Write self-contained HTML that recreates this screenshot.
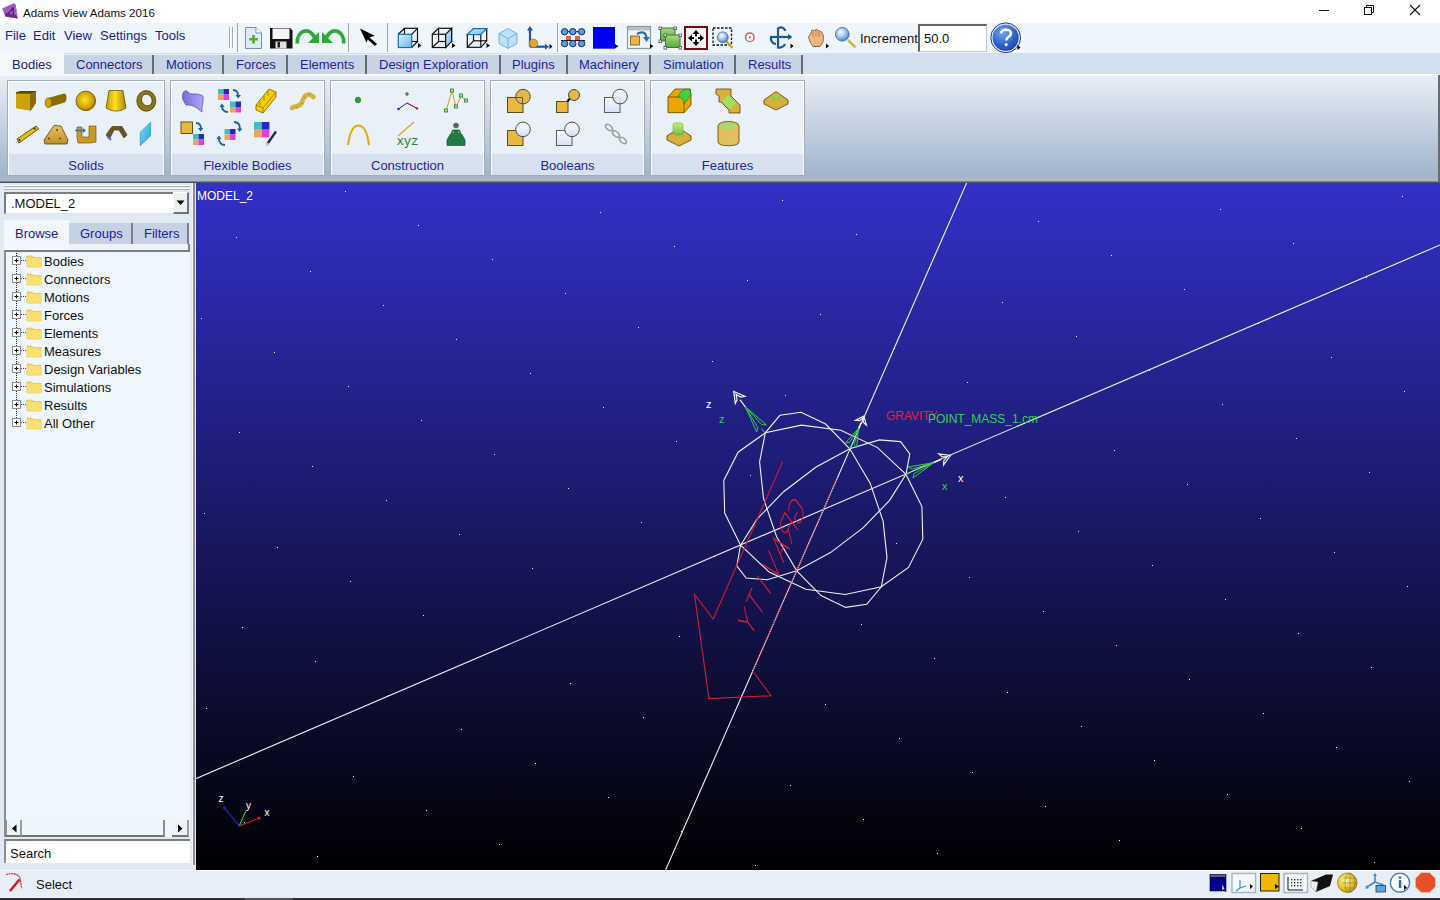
<!DOCTYPE html>
<html><head><meta charset="utf-8">
<style>
*{margin:0;padding:0;box-sizing:border-box}
html,body{width:1440px;height:900px;overflow:hidden;background:#fff;font-family:"Liberation Sans",sans-serif}
.a{position:absolute}
#title{left:0;top:0;width:1440px;height:22px;background:#fff}
#menu{left:0;top:23px;width:1440px;height:30px;background:#EEF5FC}
#tabs{left:0;top:53px;width:1440px;height:21px;background:#D3DEEF}
#ribbon{left:0;top:74px;width:1440px;height:109px;background:linear-gradient(#FAFCFE 0px,#FAFCFE 1px,#E8EEF6 2px,#A0B4CC 103px,#AEB8C4 104px,#AEB8C4 107px,#4A5068 108px)}
#left{left:0;top:183px;width:196px;height:687px;background:#E1E9F3}
#vp{left:196px;top:183px;width:1244px;height:687px;background:linear-gradient(#3230C8,#000)}
#status{left:0;top:870px;width:1440px;height:28px;background:#E7EEF7}
#bottom{left:0;top:898px;width:1440px;height:2px;background:#2E3236}
.t{position:absolute;white-space:nowrap;font-size:13px;line-height:14px}
.mn{color:#1E1E8C}
.tab{position:absolute;top:55px;height:19px;background:#C8D3E3;border-right:2px solid #646A72}
.tabt{position:absolute;top:58px;font-size:13px;line-height:14px;color:#1E1E9C;white-space:nowrap}
.panel{position:absolute;top:80px;height:96px;border:1px solid #A3ABB5;background:#E9F0F8;box-shadow:inset 0 0 0 1px #fff}
.plabel{position:absolute;left:1px;right:1px;bottom:0px;height:21px;background:#D6E0EE;color:#24249E;font-size:13px;line-height:23px;text-align:center}
svg{position:absolute;left:0;top:0}
</style></head>
<body>
<div id="title" class="a"></div>
<div id="menu" class="a"></div>
<div id="tabs" class="a"></div>
<div id="ribbon" class="a"></div>
<div id="left" class="a"></div>
<div id="vp" class="a"></div>
<div id="status" class="a"></div>
<div id="bottom" class="a"></div>
<!-- title -->
<div class="t" style="left:23px;top:6px;font-size:11.6px;color:#111">Adams View Adams 2016</div>
<!-- menu -->
<div class="t mn" style="left:5px;top:29px">File</div>
<div class="t mn" style="left:33px;top:29px">Edit</div>
<div class="t mn" style="left:64px;top:29px">View</div>
<div class="t mn" style="left:100px;top:29px">Settings</div>
<div class="t mn" style="left:155px;top:29px">Tools</div>
<!-- tabs -->
<div class="a" style="left:0;top:52px;width:64px;height:23px;background:#F4F8FD"></div>
<div class="a" style="left:64px;top:53.5px;width:739px;height:1.5px;background:#EAF0F8"></div>
<div class="tabt" style="left:12px;color:#20207A">Bodies</div>
<div class="tab" style="left:64px;width:90px"></div><div class="tabt" style="left:76px">Connectors</div>
<div class="tab" style="left:154px;width:70px"></div><div class="tabt" style="left:166px">Motions</div>
<div class="tab" style="left:224px;width:64px"></div><div class="tabt" style="left:236px">Forces</div>
<div class="tab" style="left:288px;width:79px"></div><div class="tabt" style="left:300px">Elements</div>
<div class="tab" style="left:367px;width:134px"></div><div class="tabt" style="left:379px">Design Exploration</div>
<div class="tab" style="left:501px;width:67px"></div><div class="tabt" style="left:512px">Plugins</div>
<div class="tab" style="left:568px;width:83px"></div><div class="tabt" style="left:579px">Machinery</div>
<div class="tab" style="left:651px;width:85px"></div><div class="tabt" style="left:663px">Simulation</div>
<div class="tab" style="left:736px;width:67px"></div><div class="tabt" style="left:748px">Results</div>
<!-- ribbon panels -->
<div class="panel" style="left:7px;width:158px"><div class="plabel">Solids</div></div>
<div class="panel" style="left:170px;width:155px"><div class="plabel">Flexible Bodies</div></div>
<div class="panel" style="left:330px;width:155px"><div class="plabel">Construction</div></div>
<div class="panel" style="left:490px;width:155px"><div class="plabel">Booleans</div></div>
<div class="panel" style="left:650px;width:155px"><div class="plabel">Features</div></div>
<!-- toolbar extra -->
<div class="t" style="left:860px;top:32px;color:#111">Increment</div>
<div class="a" style="left:918px;top:24px;width:69px;height:28px;background:#fff;border:1px solid #C4C8CC;border-top:2px solid #646464;border-left:2px solid #646464"></div>
<div class="t" style="left:924px;top:32px;color:#111">50.0</div>
<div class="a" style="left:1438px;top:75px;width:2px;height:107px;background:#686C72"></div>
<svg width="1440" height="80" viewBox="0 0 1440 80">
<defs>
<linearGradient id="gBlue" x1="0" y1="0" x2="1" y2="1"><stop offset="0" stop-color="#D8F0FF"/><stop offset="1" stop-color="#6FB8E8"/></linearGradient>
<radialGradient id="gHelp" cx="0.4" cy="0.3" r="0.8"><stop offset="0" stop-color="#6FA8F0"/><stop offset="0.6" stop-color="#2B5FC8"/><stop offset="1" stop-color="#1A3C98"/></radialGradient>
<radialGradient id="gGlass" cx="0.4" cy="0.35" r="0.7"><stop offset="0" stop-color="#FFFFFF"/><stop offset="0.5" stop-color="#9CC8F0"/><stop offset="1" stop-color="#3A78C8"/></radialGradient>
<linearGradient id="gGreen" x1="0" y1="0" x2="0" y2="1"><stop offset="0" stop-color="#A8D880"/><stop offset="1" stop-color="#5CA838"/></linearGradient>
</defs>
<!-- title icon -->
<path d="M2 8.5 L14.5 3 L17.8 18.5 L5.5 16.5 Z" fill="#A658C8"/>
<path d="M14.5 3 L17.8 18.5 L15.8 5.5Z" fill="#7A3098"/><path d="M5.5 16.5 L17.8 18.5 L16 15 L5 13Z" fill="#6A2A88"/>
<path d="M7.5 14.5 L13 8 L13.5 14.5" fill="none" stroke="#3A0F50" stroke-width="1.1"/>
<!-- window controls -->
<rect x="1319" y="10" width="10" height="1" fill="#111"/>
<rect x="1364.5" y="7.5" width="7" height="7" fill="none" stroke="#111" stroke-width="1"/>
<path d="M1366.5 7.5 V5.5 H1373.5 V12.5 H1371.5" fill="none" stroke="#111" stroke-width="1"/>
<path d="M1410 5 L1420 15 M1420 5 L1410 15" stroke="#111" stroke-width="1.1"/>
<!-- grip -->
<path d="M229.5 27 V48 M232.5 27 V48" stroke="#A8ACB2" stroke-width="1"/>
<path d="M230.5 27 V48 M233.5 27 V48" stroke="#FFFFFF" stroke-width="1"/>
<rect x="237" y="23" width="1" height="29" fill="#A0A4AA"/>
<rect x="348" y="23" width="1" height="29" fill="#A0A4AA"/>
<rect x="387" y="23" width="1" height="29" fill="#A0A4AA"/>
<rect x="557" y="23" width="1" height="29" fill="#A0A4AA"/>
<!-- new doc -->
<path d="M245.5 27.5 H256 L261.5 33 V48.5 H245.5 Z" fill="#DDEBFA" stroke="#8088B8" stroke-width="1"/>
<path d="M256 27.5 V33 H261.5" fill="#fff" stroke="#8088B8" stroke-width="1"/>
<path d="M253.5 35 V43.5 M249.2 39.2 H257.8" stroke="#4CB028" stroke-width="2.6"/>
<!-- save -->
<path d="M270 28 H290 L292.5 30.5 V48.5 H270 Z" fill="#111"/>
<rect x="272.5" y="28.5" width="17" height="10.5" fill="#F4F4F4"/>
<rect x="275.5" y="41.5" width="11" height="7" fill="#E0E0E0"/>
<rect x="277.5" y="42" width="2.5" height="5.5" fill="#222"/>
<!-- redo / undo -->
<path d="M297.3 43.5 C296.5 31 309 25.5 314.5 37.5" fill="none" stroke="#2FA83A" stroke-width="3.8"/>
<path d="M319 32 V43 H308 Z" fill="#2FA83A"/>
<path d="M343.7 43.5 C344.5 31 332 25.5 326.5 37.5" fill="none" stroke="#2FA83A" stroke-width="3.8"/>
<path d="M322 32 V43 H333 Z" fill="#2FA83A"/>
<!-- arrow cursor -->
<path d="M360 28.5 L374.8 35.8 L369.5 37.5 L377 44 L375 46 L367.7 39.5 L366.5 42.8 Z" fill="#000"/>
<!-- cube1 -->
<g fill="none" stroke="#111" stroke-width="1.2">
<rect x="404.5" y="28.3" width="13" height="13.2"/>
<path d="M398.3 34.3 L404.5 28.3 M411.7 34.3 L417.5 28.3 M411.7 47.5 L417.5 41.5 M398.3 47.5 L404.5 41.5"/>
</g>
<rect x="398.3" y="34.3" width="13.4" height="13.2" fill="url(#gBlue)" stroke="#1C6EB0" stroke-width="1.2"/>
<path d="M418 43 L421.5 45.5 L418 48Z" fill="#000"/>
<!-- cube2 -->
<g fill="none" stroke="#111" stroke-width="1.2">
<rect x="432.3" y="34.3" width="13.4" height="13.2"/>
<rect x="438.6" y="28.3" width="13" height="13.2"/>
<path d="M432.3 34.3 L438.6 28.3 M432.3 47.5 L438.6 41.5"/>
</g>
<path d="M445.7 34.3 L451.6 28.3 V41.5 L445.7 47.5 Z" fill="url(#gBlue)" stroke="#111" stroke-width="1.2"/>
<path d="M452 43 L455.5 45.5 L452 48Z" fill="#000"/>
<!-- cube3 -->
<g fill="none" stroke="#111" stroke-width="1.2">
<rect x="467.3" y="34.5" width="13.5" height="12.8"/>
<rect x="473.5" y="28.6" width="13.2" height="12.2"/>
<path d="M467.3 47.3 L473.5 40.8 M480.8 47.3 L486.7 40.8"/>
</g>
<path d="M467.3 34.5 L473.5 28.6 H486.7 L480.8 34.5 Z" fill="url(#gBlue)" stroke="#1C6EB0" stroke-width="1.2"/>
<path d="M486.5 43 L490 45.5 L486.5 48Z" fill="#000"/>
<!-- iso cube -->
<path d="M508 28.5 L517 33.5 V43.5 L508 48.4 L499 43.5 V33.5 Z" fill="#BFE0F8" stroke="#6AB4E4" stroke-width="1"/>
<path d="M499 33.5 L508 38.5 L517 33.5 M508 38.5 V48.4" fill="none" stroke="#6AB4E4" stroke-width="1"/>
<!-- axis icon -->
<path d="M530 46.7 V28" stroke="#1E5A9A" stroke-width="2.2"/>
<path d="M527 30.5 L530 26 L533 30.5Z" fill="#1E5A9A"/>
<path d="M530 46.7 H547" stroke="#1E5A9A" stroke-width="2.2"/>
<path d="M545 43.7 L549 46.7 L545 49.7Z" fill="#1E5A9A"/>
<circle cx="533.5" cy="43.3" r="4.3" fill="#E0A830" stroke="#8A6A20" stroke-width="0.6"/>
<path d="M549.5 44 L552.5 46.5 L549.5 49Z" fill="#000"/>
<!-- dots grid -->
<path d="M561 31.7 H585 M561 40.5 H585" stroke="#111" stroke-width="1"/>
<rect x="566" y="36" width="5" height="4" fill="#E06040"/>
<rect x="575" y="36" width="5" height="4" fill="#E06040"/>
<g fill="#5A9CE0" stroke="#0A2050" stroke-width="0.9">
<circle cx="564.6" cy="31.7" r="3.2"/><circle cx="572.8" cy="31.7" r="3.2"/><circle cx="581.6" cy="31.7" r="3.2"/>
<circle cx="564.6" cy="43.6" r="3.2"/><circle cx="572.8" cy="43.6" r="3.2"/><circle cx="581.6" cy="43.6" r="3.2"/>
</g>
<!-- blue square -->
<rect x="593" y="27" width="22" height="21.7" fill="#0000F0"/>
<path d="M615 44 L618.5 46.3 L615 48.6Z" fill="#000"/>
<!-- window icon -->
<rect x="627.5" y="26.5" width="23" height="22" fill="#F0F4F8" stroke="#9098A4" stroke-width="1.2"/>
<rect x="628" y="27" width="22" height="3.5" fill="#B8C0CC"/>
<rect x="630.5" y="36" width="9" height="9" fill="#E8B840" stroke="#6A5A30" stroke-width="0.8"/>
<path d="M637 34 C642 31 646 32 646.5 38" fill="none" stroke="#2A70B0" stroke-width="2.2"/>
<path d="M643 37 L650 37 L646.5 42Z" fill="#2A70B0"/>
<path d="M650 44 L653.5 46.3 L650 48.6Z" fill="#000"/>
<!-- green squares -->
<rect x="660.5" y="28" width="14.5" height="13" fill="url(#gGreen)" stroke="#3C7A30" stroke-width="1"/>
<rect x="665.5" y="35" width="14.5" height="12.5" fill="url(#gGreen)" stroke="#3C7A30" stroke-width="1"/>
<g fill="#fff" stroke="#40505A" stroke-width="0.8">
<rect x="659" y="27" width="2.6" height="2.6"/><rect x="674" y="27" width="2.6" height="2.6"/><rect x="659" y="40" width="2.6" height="2.6"/>
<rect x="664" y="34" width="2.6" height="2.6"/><rect x="679" y="34" width="2.6" height="2.6"/><rect x="664" y="46.5" width="2.6" height="2.6"/><rect x="679" y="46.5" width="2.6" height="2.6"/>
</g>
<!-- red fit -->
<rect x="685" y="27" width="22" height="22" fill="#F2F4F6" stroke="#7A0E0E" stroke-width="2"/>
<path d="M696 30 L699.5 34 H697 V36.5 H695 V34 H692.5Z M696 46 L699.5 42 H697 V39.5 H695 V42 H692.5Z M688 38 L692 34.5 V37 H694 V39 H692 V41.5Z M704 38 L700 34.5 V37 H698 V39 H700 V41.5Z" fill="#000"/>
<!-- dashed zoom -->
<rect x="713" y="28" width="18.5" height="17" fill="none" stroke="#111" stroke-width="1.3" stroke-dasharray="2.5 1.5"/>
<path d="M726 41 L732.5 48" stroke="#C8A030" stroke-width="2.2"/>
<circle cx="722.8" cy="37.3" r="5.4" fill="url(#gGlass)" stroke="#406090" stroke-width="0.8"/>
<!-- red circle -->
<circle cx="749.8" cy="37.3" r="4.3" fill="none" stroke="#D86040" stroke-width="1.4"/>
<circle cx="749.8" cy="37.3" r="1" fill="#D86040"/>
<!-- rotate -->
<g fill="none" stroke="#1A5A98" stroke-width="2.2">
<path d="M778 48.5 V28"/>
<path d="M770 37 H790"/>
<path d="M778 28.5 C781 26 785 28 785 31"/>
<path d="M771 37 C770 41 773 44 776 44"/>
<path d="M778 47.5 C781 48 784 46.5 785 44"/>
</g>
<path d="M788 34 L792.5 37 L788 40Z" fill="#1A5A98"/>
<path d="M790.5 43.5 L793.5 46 L790.5 48.5Z" fill="#000"/>
<!-- hand -->
<path d="M808.5 37 L811 33 L812 30 L814.5 31 L815.5 29.5 L818 30 L819 31 L821.5 32 L823.5 36 L823 42 L820 46.5 L813 46.5 L810 42 Z" fill="#F0B880" stroke="#8A5A30" stroke-width="0.9"/>
<path d="M813 32 V37 M816 31 V36 M819 32 V37" stroke="#8A5A30" stroke-width="0.7"/>
<path d="M826 43.5 L829 46 L826 48.5Z" fill="#000"/>
<!-- magnifier -->
<path d="M848 40 L855.5 47.5" stroke="#D8B040" stroke-width="2.6"/>
<circle cx="842.3" cy="34.3" r="6.8" fill="url(#gGlass)" stroke="#5078A8" stroke-width="1"/>
<!-- help -->
<circle cx="1005.7" cy="37.8" r="13.8" fill="url(#gHelp)" stroke="#D8E8F8" stroke-width="1.4"/>
<circle cx="1005.7" cy="37.8" r="14.9" fill="none" stroke="#2A3A70" stroke-width="1"/>
<path d="M1001 33.5 C1001 28.5 1011 28.5 1011 33.5 C1011 36.5 1006.2 37 1006.2 40.5" fill="none" stroke="#fff" stroke-width="2.6"/>
<circle cx="1006.2" cy="44.7" r="1.6" fill="#fff"/>
<path d="M1017.5 45 L1020.5 47.5 L1017.5 50Z" fill="#000"/>
</svg>
<svg width="1440" height="183" viewBox="0 0 1440 183">
<defs>
<linearGradient id="gGold" x1="0" y1="0" x2="1" y2="1"><stop offset="0" stop-color="#F2C820"/><stop offset="1" stop-color="#9A7800"/></linearGradient>
<radialGradient id="gSph" cx="0.45" cy="0.45" r="0.6"><stop offset="0" stop-color="#FFE030"/><stop offset="0.7" stop-color="#D0A000"/><stop offset="1" stop-color="#806000"/></radialGradient>
<linearGradient id="gFr" x1="0" y1="0" x2="1" y2="0"><stop offset="0" stop-color="#C09800"/><stop offset="0.45" stop-color="#FFE020"/><stop offset="1" stop-color="#A88400"/></linearGradient>
<linearGradient id="gTan" x1="0" y1="0" x2="0" y2="1"><stop offset="0" stop-color="#E8C060"/><stop offset="1" stop-color="#C09030"/></linearGradient>
<linearGradient id="gWh" x1="0" y1="0" x2="0" y2="1"><stop offset="0" stop-color="#FFFFFF"/><stop offset="1" stop-color="#D0E0F4"/></linearGradient>
<linearGradient id="gCyan" x1="0" y1="0" x2="1" y2="1"><stop offset="0" stop-color="#80E0F8"/><stop offset="1" stop-color="#20A0D0"/></linearGradient>
<linearGradient id="gPur" x1="0" y1="0" x2="1" y2="0"><stop offset="0" stop-color="#7A6AD8"/><stop offset="1" stop-color="#B0A8F0"/></linearGradient>
<linearGradient id="gGr2" x1="0" y1="0" x2="0" y2="1"><stop offset="0" stop-color="#C0F080"/><stop offset="1" stop-color="#70C040"/></linearGradient>
<g id="quad"><rect x="0" y="0" width="5.5" height="5.5" fill="#40C0B8"/><rect x="5.5" y="0" width="5.5" height="5.5" fill="#2828C8"/><rect x="0" y="5.5" width="5.5" height="5.5" fill="#F0A060"/><rect x="5.5" y="5.5" width="5.5" height="5.5" fill="#E040D8"/></g>
</defs>
<!-- SOLIDS -->
<path d="M16 92 L21 91 H36.5 L36 93 V103 L31 110.6 L16 108 Z" fill="#8A6C00"/>
<path d="M16 93.5 H30 V110.5 L16 108Z" fill="#D0A400"/>
<path d="M16 92.5 L21 91 H36.5 L30 93.5 H16Z" fill="#5A4800"/>
<path d="M48 98 L64 93.5 C67 93 67.5 101 64.5 102.5 L48 107.5 Z" fill="#8A6C00"/>
<ellipse cx="48.5" cy="102.8" rx="3.3" ry="4.8" fill="#D0A400" stroke="#6A5000" stroke-width="0.6"/>
<circle cx="85.8" cy="100.9" r="9.8" fill="url(#gSph)" stroke="#5A4400" stroke-width="0.7"/>
<path d="M109 90.5 H123 L126 108 C120 112 112 112 106 108Z" fill="url(#gFr)" stroke="#5A4400" stroke-width="0.7"/>
<ellipse cx="146.3" cy="100.9" rx="9.5" ry="10.3" fill="#8A7A10" stroke="#3A3000" stroke-width="0.7"/>
<ellipse cx="146.8" cy="100" rx="5.2" ry="6" transform="rotate(-25 146.8 100)" fill="#E9F0F8" stroke="#3A3000" stroke-width="0.7"/>
<path d="M17 139 L36 126 L38.5 129 L19 143Z" fill="#E8C000" stroke="#4A3A00" stroke-width="0.8"/>
<circle cx="19.5" cy="140" r="1.1" fill="#222"/><circle cx="34.5" cy="128.5" r="1.1" fill="#222"/>
<path d="M54 125.5 L61 126 L68 140 L67 144 L45 144 L44 140 Z" fill="url(#gTan)" stroke="#5A4000" stroke-width="0.8"/>
<circle cx="57" cy="130" r="0.9" fill="#5A3A00"/><circle cx="49" cy="138.5" r="0.9" fill="#5A3A00"/><circle cx="60" cy="138.5" r="0.9" fill="#5A3A00"/>
<path d="M77 127 H82 V137 H89 V126 H96 V142 L90 143 H78 L77 137Z" fill="#C89A20" stroke="#6A4A00" stroke-width="0.6"/>
<path d="M75 130.5 H84" stroke="#3A70C0" stroke-width="1.6"/><path d="M83 128 L86 130.5 L83 133Z" fill="#3A70C0"/>
<path d="M106 135 L112 126.5 H122 L127 135 L124 138 L119 130 H114 L110 138Z" fill="#6A5420" stroke="#3A2A00" stroke-width="0.6"/>
<path d="M107 136 L111 140" stroke="#4A70C0" stroke-width="2"/>
<path d="M140.2 132.3 L150.6 122.2 V135.6 L140.2 145.7 Z" fill="url(#gCyan)" stroke="#1888B8" stroke-width="0.6"/>
<!-- FLEX -->
<path d="M183 100 C181 91 186 89 188 92 C191 96 196 92 203 96 C204 101 201 108 202 112 C199 110 194 104 186 105 Z" fill="url(#gPur)" stroke="#5A50B8" stroke-width="0.8"/>
<use href="#quad" x="218" y="89"/><use href="#quad" x="230" y="101.5"/>
<path d="M233 90 C237 90 238 92 238 96" fill="none" stroke="#1A64A0" stroke-width="1.8"/><path d="M235.5 95 L241 95 L238 98.5Z" fill="#1A64A0"/>
<path d="M228 112 C224 112 222 110 222 106" fill="none" stroke="#1A64A0" stroke-width="1.8"/><path d="M219.5 107 L224.5 107 L222 103.5Z" fill="#1A64A0"/>
<path d="M256 105 L269 89 L276 92 V97 L263 113 L256 110Z" fill="#F8D000" stroke="#7A5A00" stroke-width="0.8"/>
<path d="M256 105 L263 108 L276 92 M263 108 V113 M260 101 V106 M264 96 V101 M268 91 V96" fill="none" stroke="#7A5A00" stroke-width="0.6"/>
<path d="M292 108 C296 105 300 108 302 102 C303.5 97 305 94.5 308.5 94.5 C311 94.5 312 96 313.5 97" fill="none" stroke="#D8B040" stroke-width="4.6" stroke-linecap="round"/><path d="M296 106.5 L297 109 M301 103 L303.5 104 M304 97 L306.5 98.5 M309 93 L309.5 96" stroke="#B08A20" stroke-width="0.7"/>
<rect x="181" y="122" width="11.5" height="11.5" fill="#E8B838" stroke="#5A4000" stroke-width="0.9"/>
<use href="#quad" x="193" y="134"/>
<path d="M196 123 C199 123 201 125 201 129" fill="none" stroke="#1A64A0" stroke-width="1.8"/><path d="M198 128 L203.5 128 L200.5 131.5Z" fill="#1A64A0"/>
<use href="#quad" x="224.5" y="129"/>
<path d="M234 122 C238 122 240 125 240 129" fill="none" stroke="#1A64A0" stroke-width="1.8"/><path d="M237 128.5 L242.5 128.5 L239.5 132Z" fill="#1A64A0"/>
<path d="M225 145 C221 145 219 142 219 138" fill="none" stroke="#1A64A0" stroke-width="1.8"/><path d="M216.5 139 L221.5 139 L219 135.5Z" fill="#1A64A0"/>
<g transform="translate(254 122) scale(1.4)"><use href="#quad"/></g>
<path d="M266.5 145 L276 131.5" stroke="#2A2A50" stroke-width="2.4"/><path d="M266 145.5 L268 143" stroke="#C8D0F0" stroke-width="2.4"/>
<!-- CONSTRUCTION -->
<circle cx="358" cy="100" r="2.8" fill="#22A030" stroke="#106010" stroke-width="0.5"/>
<path d="M398.5 109 L407 103 L417 108.5" fill="none" stroke="#2020A0" stroke-width="1"/><path d="M407 103 L417 108.5" stroke="#C02030" stroke-width="1"/>
<circle cx="398.5" cy="109" r="1.2" fill="#2020A0"/><circle cx="417" cy="108.5" r="1.2" fill="#C02030"/>
<path d="M407 92 V96 M405 94 H409" stroke="#106020" stroke-width="1"/>
<path d="M446 111 L452 90.5 L456 107 L461 96 L466 101" fill="none" stroke="#D0A020" stroke-width="1"/>
<g fill="#B0F080" stroke="#108010" stroke-width="0.8"><rect x="444.5" y="109" width="3" height="3"/><rect x="450.5" y="89" width="3" height="3"/><rect x="454.5" y="105" width="3" height="3"/><rect x="459.5" y="94" width="3" height="3"/><rect x="464.5" y="99" width="3" height="3"/></g>
<path d="M348 145 C350 130 354 125.5 358.5 125.5 C363 125.5 367 130 369 145" fill="none" stroke="#E8A810" stroke-width="2.1"/>
<path d="M398 136 L414 122" stroke="#D8A810" stroke-width="1.2"/>
<text x="396.5" y="144.5" font-family="Liberation Mono" font-size="12.5" fill="#208030" textLength="22">xyz</text>
<circle cx="456" cy="125.5" r="2.8" fill="#606468"/>
<path d="M452.5 130 H459.5 L461 134 L462 134.5 L465 140 V145.5 H447 V140 L450 134.5 L451 134Z" fill="#1E7A40" stroke="#0A4A20" stroke-width="0.6"/><path d="M453 131 L454 133 M459 131 L458 133" stroke="#fff" stroke-width="0.5"/>
<!-- BOOLEANS -->
<rect x="507.5" y="97.5" width="15.5" height="15" fill="#E8B840" stroke="#5A4A20" stroke-width="1"/>
<circle cx="523" cy="96.6" r="7.3" fill="#E8B840" stroke="#4A4A50" stroke-width="1"/>
<path d="M516 97.5 H522.5 V104" fill="none" stroke="#4A4A50" stroke-width="0.9"/>
<rect x="556.5" y="101.5" width="11.5" height="11" fill="#E8B840" stroke="#5A4A20" stroke-width="1"/>
<path d="M567 102 L572 96" stroke="#000" stroke-width="2"/>
<circle cx="574" cy="95" r="5.5" fill="#E8B840" stroke="#4A4A50" stroke-width="1"/>
<rect x="604.5" y="97.5" width="15.5" height="15" fill="url(#gWh)" stroke="#5A5A60" stroke-width="1"/>
<circle cx="620" cy="96.6" r="7.3" fill="url(#gWh)" stroke="#4A4A50" stroke-width="1" fill-opacity="0.85"/>
<rect x="507.5" y="130.5" width="15.5" height="15" fill="#E8B840" stroke="#5A4A20" stroke-width="1"/>
<circle cx="523" cy="129.4" r="7.3" fill="url(#gWh)" stroke="#4A4A50" stroke-width="1"/>
<rect x="556.5" y="130.5" width="15.5" height="15" fill="url(#gWh)" stroke="#5A5A60" stroke-width="1"/>
<circle cx="572" cy="129.4" r="7.3" fill="url(#gWh)" stroke="#4A4A50" stroke-width="1"/>
<g fill="none" stroke="#9A9CA0" stroke-width="1.6"><ellipse cx="609" cy="127.5" rx="4" ry="2.3" transform="rotate(40 609 127.5)"/><ellipse cx="616" cy="134" rx="4" ry="2.3" transform="rotate(40 616 134)"/><ellipse cx="623" cy="140.5" rx="4" ry="2.3" transform="rotate(40 623 140.5)"/></g>
<!-- FEATURES -->
<path d="M668 97 L675 89 H690 L691 95 V105 L684 112.7 H668Z" fill="#E8A800" stroke="#5A4000" stroke-width="0.8"/>
<path d="M684 97 V112.7 M668 97 H684 L691 89" fill="none" stroke="#5A4000" stroke-width="0.7"/>
<path d="M678 97 C680 91 684 89 690 89 L691 95 L684 104 C684 100 682 97 678 97Z" fill="#40D040" stroke="#207020" stroke-width="0.6"/>
<path d="M716 89 H731 V96 L740 105 V113 H729 V110 L721 102 H719 V96 L716 94Z" fill="#D8B040" stroke="#5A4000" stroke-width="0.8"/>
<path d="M722 101 L728 95 L736 103 L730 109Z" fill="#A0E060"/>
<path d="M764 100 L776 91.5 L788 100 V104 L776 110 L764 104Z" fill="#D8B040" stroke="#5A4000" stroke-width="0.8"/>
<ellipse cx="776" cy="98" rx="5" ry="2" fill="#90D050"/>
<path d="M667 136 L679 128 L691 136 V140 L679 146 L667 140Z" fill="#D8B040" stroke="#5A4000" stroke-width="0.8"/>
<rect x="673" y="123" width="10" height="12" rx="2" fill="url(#gGr2)" stroke="#60A030" stroke-width="0.5"/>
<path d="M718 126 C718 120 739 120 739 126 V142 C739 147 718 147 718 142Z" fill="#E0C060" stroke="#5A4000" stroke-width="0.8"/>
<ellipse cx="728.5" cy="126" rx="8.5" ry="3.5" fill="#A8D870"/>
</svg>
<!-- left panel -->
<div class="a" style="left:4px;top:185px;width:186px;height:1px;background:#fff"></div>
<div class="a" style="left:4px;top:186px;width:186px;height:1px;background:#A8B0BA"></div>
<div class="a" style="left:4px;top:188px;width:186px;height:1px;background:#fff"></div>
<div class="a" style="left:4px;top:189px;width:186px;height:1px;background:#A8B0BA"></div>
<div class="a" style="left:4px;top:192px;width:185px;height:22px;background:#fff;border-top:2px solid #7A7E84;border-left:2px solid #7A7E84;border-bottom:1px solid #E0E4EA"></div>
<div class="t" style="left:11px;top:197px;color:#111">.MODEL_2</div>
<div class="a" style="left:173px;top:192px;width:16px;height:22px;background:#EEF0F2;border-right:2px solid #70747A;border-bottom:2px solid #70747A;border-left:1px solid #fff;border-top:1px solid #fff"></div>
<svg width="196" height="220" viewBox="0 0 196 220" style="top:0"><path d="M176.5 200.5 H184.5 L180.5 205Z" fill="#000"/></svg>
<!-- browse tabs -->
<div class="a" style="left:4px;top:220px;width:65px;height:30px;background:#F2F7FC"></div>
<div class="t" style="left:15px;top:227px;color:#20208C">Browse</div>
<div class="a" style="left:69px;top:223px;width:64px;height:21px;background:#C6D2E3;border-right:2px solid #7A8088"></div>
<div class="t" style="left:80px;top:227px;color:#1A1AB0">Groups</div>
<div class="a" style="left:133px;top:223px;width:56px;height:21px;background:#C6D2E3;border-right:2px solid #7A8088"></div>
<div class="t" style="left:144px;top:227px;color:#1A1AB0">Filters</div>
<div class="a" style="left:69px;top:244px;width:121px;height:6px;background:#EEF3F9;border-right:2px solid #7A8088"></div>
<!-- tree -->
<div class="a" style="left:4px;top:250px;width:186px;height:587px;background:#EFF6FD;border-top:2px solid #7A7E84;border-left:2px solid #8A8E94"></div>
<div class="t" style="left:44px;top:255px;color:#111">Bodies</div>
<div class="t" style="left:44px;top:273px;color:#111">Connectors</div>
<div class="t" style="left:44px;top:291px;color:#111">Motions</div>
<div class="t" style="left:44px;top:309px;color:#111">Forces</div>
<div class="t" style="left:44px;top:327px;color:#111">Elements</div>
<div class="t" style="left:44px;top:345px;color:#111">Measures</div>
<div class="t" style="left:44px;top:363px;color:#111">Design Variables</div>
<div class="t" style="left:44px;top:381px;color:#111">Simulations</div>
<div class="t" style="left:44px;top:399px;color:#111">Results</div>
<div class="t" style="left:44px;top:417px;color:#111">All Other</div>
<svg width="196" height="900" viewBox="0 0 196 900" style="top:0">
<path d="M16.5 253 V422" stroke="#222" stroke-width="1" stroke-dasharray="1 1"/>
<rect x="12.5" y="256.5" width="8" height="8" fill="#fff" stroke="#8A8E94" stroke-width="1"/>
<path d="M14.5 260.5 H18.5 M16.5 258.5 V262.5" stroke="#000" stroke-width="1"/>
<path d="M21 260.5 H26" stroke="#444" stroke-width="1" stroke-dasharray="1 1"/>
<path d="M27 256 H32 L33.5 257.5 H41 V267 H27Z" fill="#F8D860" stroke="#E0B830" stroke-width="0.6"/>
<rect x="27.3" y="258.5" width="13.5" height="8.3" fill="#FAE070"/>
<rect x="12.5" y="274.5" width="8" height="8" fill="#fff" stroke="#8A8E94" stroke-width="1"/>
<path d="M14.5 278.5 H18.5 M16.5 276.5 V280.5" stroke="#000" stroke-width="1"/>
<path d="M21 278.5 H26" stroke="#444" stroke-width="1" stroke-dasharray="1 1"/>
<path d="M27 274 H32 L33.5 275.5 H41 V285 H27Z" fill="#F8D860" stroke="#E0B830" stroke-width="0.6"/>
<rect x="27.3" y="276.5" width="13.5" height="8.3" fill="#FAE070"/>
<rect x="12.5" y="292.5" width="8" height="8" fill="#fff" stroke="#8A8E94" stroke-width="1"/>
<path d="M14.5 296.5 H18.5 M16.5 294.5 V298.5" stroke="#000" stroke-width="1"/>
<path d="M21 296.5 H26" stroke="#444" stroke-width="1" stroke-dasharray="1 1"/>
<path d="M27 292 H32 L33.5 293.5 H41 V303 H27Z" fill="#F8D860" stroke="#E0B830" stroke-width="0.6"/>
<rect x="27.3" y="294.5" width="13.5" height="8.3" fill="#FAE070"/>
<rect x="12.5" y="310.5" width="8" height="8" fill="#fff" stroke="#8A8E94" stroke-width="1"/>
<path d="M14.5 314.5 H18.5 M16.5 312.5 V316.5" stroke="#000" stroke-width="1"/>
<path d="M21 314.5 H26" stroke="#444" stroke-width="1" stroke-dasharray="1 1"/>
<path d="M27 310 H32 L33.5 311.5 H41 V321 H27Z" fill="#F8D860" stroke="#E0B830" stroke-width="0.6"/>
<rect x="27.3" y="312.5" width="13.5" height="8.3" fill="#FAE070"/>
<rect x="12.5" y="328.5" width="8" height="8" fill="#fff" stroke="#8A8E94" stroke-width="1"/>
<path d="M14.5 332.5 H18.5 M16.5 330.5 V334.5" stroke="#000" stroke-width="1"/>
<path d="M21 332.5 H26" stroke="#444" stroke-width="1" stroke-dasharray="1 1"/>
<path d="M27 328 H32 L33.5 329.5 H41 V339 H27Z" fill="#F8D860" stroke="#E0B830" stroke-width="0.6"/>
<rect x="27.3" y="330.5" width="13.5" height="8.3" fill="#FAE070"/>
<rect x="12.5" y="346.5" width="8" height="8" fill="#fff" stroke="#8A8E94" stroke-width="1"/>
<path d="M14.5 350.5 H18.5 M16.5 348.5 V352.5" stroke="#000" stroke-width="1"/>
<path d="M21 350.5 H26" stroke="#444" stroke-width="1" stroke-dasharray="1 1"/>
<path d="M27 346 H32 L33.5 347.5 H41 V357 H27Z" fill="#F8D860" stroke="#E0B830" stroke-width="0.6"/>
<rect x="27.3" y="348.5" width="13.5" height="8.3" fill="#FAE070"/>
<rect x="12.5" y="364.5" width="8" height="8" fill="#fff" stroke="#8A8E94" stroke-width="1"/>
<path d="M14.5 368.5 H18.5 M16.5 366.5 V370.5" stroke="#000" stroke-width="1"/>
<path d="M21 368.5 H26" stroke="#444" stroke-width="1" stroke-dasharray="1 1"/>
<path d="M27 364 H32 L33.5 365.5 H41 V375 H27Z" fill="#F8D860" stroke="#E0B830" stroke-width="0.6"/>
<rect x="27.3" y="366.5" width="13.5" height="8.3" fill="#FAE070"/>
<rect x="12.5" y="382.5" width="8" height="8" fill="#fff" stroke="#8A8E94" stroke-width="1"/>
<path d="M14.5 386.5 H18.5 M16.5 384.5 V388.5" stroke="#000" stroke-width="1"/>
<path d="M21 386.5 H26" stroke="#444" stroke-width="1" stroke-dasharray="1 1"/>
<path d="M27 382 H32 L33.5 383.5 H41 V393 H27Z" fill="#F8D860" stroke="#E0B830" stroke-width="0.6"/>
<rect x="27.3" y="384.5" width="13.5" height="8.3" fill="#FAE070"/>
<rect x="12.5" y="400.5" width="8" height="8" fill="#fff" stroke="#8A8E94" stroke-width="1"/>
<path d="M14.5 404.5 H18.5 M16.5 402.5 V406.5" stroke="#000" stroke-width="1"/>
<path d="M21 404.5 H26" stroke="#444" stroke-width="1" stroke-dasharray="1 1"/>
<path d="M27 400 H32 L33.5 401.5 H41 V411 H27Z" fill="#F8D860" stroke="#E0B830" stroke-width="0.6"/>
<rect x="27.3" y="402.5" width="13.5" height="8.3" fill="#FAE070"/>
<rect x="12.5" y="418.5" width="8" height="8" fill="#fff" stroke="#8A8E94" stroke-width="1"/>
<path d="M14.5 422.5 H18.5 M16.5 420.5 V424.5" stroke="#000" stroke-width="1"/>
<path d="M21 422.5 H26" stroke="#444" stroke-width="1" stroke-dasharray="1 1"/>
<path d="M27 418 H32 L33.5 419.5 H41 V429 H27Z" fill="#F8D860" stroke="#E0B830" stroke-width="0.6"/>
<rect x="27.3" y="420.5" width="13.5" height="8.3" fill="#FAE070"/>
</svg>
<!-- scrollbar -->
<div class="a" style="left:5px;top:820px;width:17px;height:17px;background:#EEF3F9;border-left:2px solid #8A8E94;border-bottom:2px solid #70747A;border-right:2px solid #9A9EA4"></div>
<div class="a" style="left:22px;top:820px;width:143px;height:17px;background:#EEF5FC;border-bottom:2px solid #70747A;border-right:2px solid #8A8E94"></div>
<div class="a" style="left:172px;top:820px;width:17px;height:17px;background:#EEF3F9;border-bottom:2px solid #70747A;border-right:2px solid #9A9EA4"></div>
<div class="a" style="left:4px;top:839px;width:186px;height:24px;background:#fff;border-top:2px solid #7A7E84;border-left:2px solid #8A8E94"></div>
<div class="t" style="left:10px;top:847px;color:#111">Search</div>
<div class="a" style="left:193px;top:183px;width:2px;height:682px;background:#8A8E94"></div>
<div class="a" style="left:192px;top:183px;width:1px;height:682px;background:#F4F8FC"></div>
<svg width="196" height="900" viewBox="0 0 196 900" style="top:0">
<path d="M16.5 824.5 L12 828.5 L16.5 832.5Z" fill="#000"/>
<path d="M178 824.5 L182.5 828.5 L178 832.5Z" fill="#000"/>
</svg>
<!-- status -->
<div class="a" style="left:0;top:870px;width:1440px;height:1px;background:#F8FBFE"></div>
<div class="t" style="left:36px;top:878px;color:#111">Select</div>
<div class="a" style="left:245px;top:898px;width:48px;height:2px;background:#50555E"></div>
<svg width="1440" height="900" viewBox="0 0 1440 900" style="top:0">
<defs>
<radialGradient id="gGlobe" cx="0.4" cy="0.4" r="0.7"><stop offset="0" stop-color="#FFF8A0"/><stop offset="0.6" stop-color="#E8C020"/><stop offset="1" stop-color="#A08000"/></radialGradient>
</defs>
<!-- select icon -->
<path d="M6 874.5 C11 873 17 873.5 19.5 877 C20.5 880 21 884 21.5 888.5" fill="none" stroke="#B82020" stroke-width="1.1" stroke-dasharray="2 0.6"/>
<path d="M19.5 879.5 L10 891" stroke="#C82020" stroke-width="2.6"/>
<!-- blue box -->
<rect x="1210" y="874.5" width="16" height="16.5" fill="#000090" stroke="#000040" stroke-width="0.6"/>
<rect x="1210.5" y="875.5" width="15" height="1" fill="#D8B050"/>
<path d="M1222 884 V891 L1224 889 L1226 892" fill="#fff" stroke="#000" stroke-width="0.7"/>
<!-- axis box -->
<rect x="1232" y="873.5" width="23.5" height="19" fill="#F4F8FC" stroke="#A8B4C4" stroke-width="1.4"/>
<path d="M1240 888 V880 M1240 888 L1246 886 M1240 888 L1236 891" stroke="#3A90D0" stroke-width="1.2"/>
<path d="M1250 884 L1253 886.5 L1250 889Z" fill="#000"/>
<!-- yellow box -->
<rect x="1260.5" y="873.5" width="18.5" height="17.5" fill="#F0B800" stroke="#222" stroke-width="1"/>
<path d="M1275 884 L1279 886.5 L1275 889Z" fill="#000"/>
<!-- grid chart -->
<rect x="1284" y="873.5" width="23.5" height="19" fill="#F4F8FC" stroke="#A8B4C4" stroke-width="1.4"/>
<path d="M1288 877 V890 H1303" fill="none" stroke="#111" stroke-width="1"/>
<g fill="#333"><rect x="1291" y="879" width="1.4" height="1.4"/><rect x="1294" y="879" width="1.4" height="1.4"/><rect x="1297" y="879" width="1.4" height="1.4"/><rect x="1300" y="879" width="1.4" height="1.4"/><rect x="1291" y="882" width="1.4" height="1.4"/><rect x="1294" y="882" width="1.4" height="1.4"/><rect x="1297" y="882" width="1.4" height="1.4"/><rect x="1300" y="882" width="1.4" height="1.4"/><rect x="1291" y="885" width="1.4" height="1.4"/><rect x="1294" y="885" width="1.4" height="1.4"/><rect x="1297" y="885" width="1.4" height="1.4"/><rect x="1300" y="885" width="1.4" height="1.4"/></g>
<!-- black slab -->
<path d="M1311 881 L1326 874.5 H1333 L1330 886 L1316 892 Z" fill="#111"/>
<path d="M1311 881 L1318 882 L1316 892 L1311 887Z" fill="#F0F0F0" stroke="#888" stroke-width="0.5"/>
<!-- globe -->
<circle cx="1347.3" cy="882.7" r="9.8" fill="url(#gGlobe)" stroke="#806A10" stroke-width="0.6"/>
<g fill="none" stroke="#8A7A50" stroke-width="0.6"><ellipse cx="1350" cy="882.7" rx="5" ry="9.6"/><path d="M1344 878 H1356 M1342 883 H1357 M1344 888 H1356 M1350 873 V892"/></g>
<!-- axis screen -->
<path d="M1375 882 V875 M1375 882 L1367 887 M1375 882 L1383 885" stroke="#3A90D0" stroke-width="1.6"/>
<path d="M1373 876 L1375 873 L1377 876Z M1366 885 L1365.5 889 L1369 888Z M1382 883 L1385 886 L1381 887Z" fill="#3A90D0"/>
<rect x="1376" y="885.5" width="9.5" height="6.5" fill="#5AA8E0" stroke="#334" stroke-width="0.8"/>
<!-- info -->
<circle cx="1400" cy="882.7" r="9.6" fill="#fff" stroke="#3A80C8" stroke-width="1.4"/>
<circle cx="1400" cy="877.5" r="1.3" fill="#2A6AB8"/>
<rect x="1398.8" y="880" width="2.5" height="8" fill="#2A6AB8"/>
<path d="M1404 885 L1407 887.5 L1404 890Z" fill="#000"/>
<!-- stop -->
<path d="M1421.2 872.5 H1429.6 L1435.5 878.4 V886.8 L1429.6 892.7 H1421.2 L1415.3 886.8 V878.4 Z" fill="#E85028" stroke="#F8C0A8" stroke-width="1"/>
</svg>
<svg width="1440" height="900" viewBox="0 0 1440 900" style="top:0">
<defs><clipPath id="vpc"><rect x="196" y="183" width="1244" height="687"/></clipPath></defs>
<g clip-path="url(#vpc)">
<path d="M236 237h1v1h-1z M201 318h1v1h-1z M345 191h1v1h-1z M310 271h1v1h-1z M274 352h1v1h-1z M239 432h1v1h-1z M204 513h1v1h-1z M418 225h1v1h-1z M383 305h1v1h-1z M348 386h1v1h-1z M312 466h1v1h-1z M277 547h1v1h-1z M242 627h1v1h-1z M206 708h1v1h-1z M492 259h1v1h-1z M456 339h1v1h-1z M421 420h1v1h-1z M386 500h1v1h-1z M350 581h1v1h-1z M315 661h1v1h-1z M279 742h1v1h-1z M244 822h1v1h-1z M600 212h1v1h-1z M565 293h1v1h-1z M530 373h1v1h-1z M494 454h1v1h-1z M459 534h1v1h-1z M423 615h1v1h-1z M388 695h1v1h-1z M353 776h1v1h-1z M317 856h1v1h-1z M674 246h1v1h-1z M638 327h1v1h-1z M603 407h1v1h-1z M568 488h1v1h-1z M532 568h1v1h-1z M497 649h1v1h-1z M461 729h1v1h-1z M426 810h1v1h-1z M782 200h1v1h-1z M747 280h1v1h-1z M712 361h1v1h-1z M676 441h1v1h-1z M641 522h1v1h-1z M606 602h1v1h-1z M570 683h1v1h-1z M535 763h1v1h-1z M499 844h1v1h-1z M856 234h1v1h-1z M820 314h1v1h-1z M785 395h1v1h-1z M750 475h1v1h-1z M714 556h1v1h-1z M679 636h1v1h-1z M643 717h1v1h-1z M608 797h1v1h-1z M964 187h1v1h-1z M929 268h1v1h-1z M894 348h1v1h-1z M858 429h1v1h-1z M823 509h1v1h-1z M788 590h1v1h-1z M752 670h1v1h-1z M717 751h1v1h-1z M681 831h1v1h-1z M1038 221h1v1h-1z M1002 302h1v1h-1z M967 382h1v1h-1z M932 463h1v1h-1z M896 543h1v1h-1z M861 624h1v1h-1z M825 704h1v1h-1z M790 785h1v1h-1z M755 865h1v1h-1z M1111 255h1v1h-1z M1076 336h1v1h-1z M1040 416h1v1h-1z M1005 497h1v1h-1z M969 577h1v1h-1z M934 658h1v1h-1z M899 738h1v1h-1z M863 819h1v1h-1z M1220 209h1v1h-1z M1184 289h1v1h-1z M1149 370h1v1h-1z M1114 450h1v1h-1z M1078 531h1v1h-1z M1043 611h1v1h-1z M1007 692h1v1h-1z M972 772h1v1h-1z M937 853h1v1h-1z M1293 243h1v1h-1z M1258 323h1v1h-1z M1222 404h1v1h-1z M1187 484h1v1h-1z M1152 565h1v1h-1z M1116 645h1v1h-1z M1081 726h1v1h-1z M1045 806h1v1h-1z M1402 196h1v1h-1z M1366 277h1v1h-1z M1331 357h1v1h-1z M1296 438h1v1h-1z M1260 518h1v1h-1z M1225 599h1v1h-1z M1189 679h1v1h-1z M1154 760h1v1h-1z M1119 840h1v1h-1z M1404 391h1v1h-1z M1369 472h1v1h-1z M1334 552h1v1h-1z M1298 633h1v1h-1z M1263 713h1v1h-1z M1227 794h1v1h-1z M1407 586h1v1h-1z M1371 667h1v1h-1z M1336 747h1v1h-1z M1301 828h1v1h-1z M1409 781h1v1h-1z M1374 862h1v1h-1z" fill="#F0F0F8" shape-rendering="crispEdges"/>
<g fill="none" stroke="#F0F0F0" stroke-width="1.1">
<path d="M966.7 182.8 L665.7 869.7"/>
<path d="M1440 245 L195.7 778.7"/>
<polygon points="906.0,474.4 909.8,453.8 900.5,441.6 879.4,439.9 849.8,448.8 816.1,467.0 783.6,491.7 757.0,519.2 740.6,545.2 736.8,565.8 746.1,578.0 767.2,579.7 796.8,570.8 830.5,552.6 863.0,527.9 889.6,500.4"/>
<polygon points="849.8,448.8 825.6,424.0 801.0,412.2 779.9,415.3 765.3,432.8 759.6,462.0 763.5,498.5 776.6,536.7 796.8,570.8 821.0,595.6 845.6,607.4 866.7,604.3 881.3,586.8 887.0,557.6 883.1,521.1 870.0,482.9"/>
<polygon points="906.0,474.4 877.5,447.6 840.8,430.3 801.4,425.1 765.3,432.8 738.1,452.2 723.8,480.4 724.7,513.0 740.6,545.2 769.1,572.0 805.8,589.3 845.2,594.5 881.3,586.8 908.5,567.4 922.8,539.2 921.9,506.6"/>
</g>
<path d="M782.6 461.6 L713.2 619 L694.5 594.5 L708.9 698.6 L771 695.7 L753.7 672.5" fill="none" stroke="#D02030" stroke-width="1.1"/>
<g transform="matrix(-0.68 1.56 0.95 1.25 793 494)" fill="none" stroke="#D02030" stroke-width="0.8"><path transform="translate(0 0)" d="M9 2 C7 0 2 0 1 4 V10 C2 14 7 14 9 12 V8 H5"/><path transform="translate(12 0)" d="M0 14 V0 H6 C9.5 0 9.5 7 6 7 H0 M5 7 L9 14"/><path transform="translate(24 0)" d="M0 14 L4.5 0 L9 14 M2 9 H7"/><path transform="translate(36 0)" d="M0 0 L4.5 14 L9 0"/><path transform="translate(48 0)" d="M4.5 0 V14"/><path transform="translate(60 0)" d="M0 0 H9 M4.5 0 V14"/><path transform="translate(72 0)" d="M0 0 L4.5 7 L9 0 M4.5 7 V14"/></g>
<path d="M837.3 478 L752.3 672" stroke="#D02030" stroke-width="1.1" stroke-dasharray="1.2 1.2"/>
<text x="886" y="420" font-family="Liberation Sans" font-size="12" fill="#E02040">GRAVITY</text>
<text x="928" y="423" font-family="Liberation Sans" font-size="12" fill="#30D050">POINT_MASS_1.cm</text>
<text x="706" y="408" font-family="Liberation Sans" font-size="11" fill="#fff">z</text>
<text x="719" y="423" font-family="Liberation Sans" font-size="11" fill="#30D050">z</text>
<text x="942" y="490" font-family="Liberation Sans" font-size="11" fill="#30D050">x</text>
<text x="958" y="482" font-family="Liberation Sans" font-size="11" fill="#fff">x</text>
<text x="197" y="200" font-family="Liberation Sans" font-size="12" fill="#fff">MODEL_2</text>
<path d="M766.3 424.8 L745.3 406.8 L756.7 432.0 L757.8 427.6 L745.3 406.8 L761.8 424.6 Z M765.0 433.0 L761.5 428.4" fill="none" stroke="#30D040" stroke-width="1"/><path d="M745.3 406.8 L740.1 399.9 M744.9 396.3 L733.7 391.4 L735.3 403.5 L737.1 399.7 L736.0 394.5 L740.7 397.0 Z" fill="none" stroke="#F4F4F4" stroke-width="1.2"/>
<path d="M856.6 447.7 L858.5 428.3 L845.6 442.9 L849.6 442.5 L858.5 428.3 L854.2 444.5 Z M849.5 449.0 L851.1 445.3" fill="none" stroke="#30D040" stroke-width="1"/><path d="M858.5 428.3 L860.9 422.8 M866.4 425.2 L863.8 416.1 L855.4 420.4 L859.4 420.7 L862.8 418.5 L863.4 422.4 Z" fill="none" stroke="#F4F4F4" stroke-width="1.2"/>
<path d="M913.0 478.0 L933.8 462.6 L908.3 467.0 L912.2 469.1 L933.8 462.6 L914.1 473.7 Z M905.7 474.6 L910.7 472.5" fill="none" stroke="#30D040" stroke-width="1"/><path d="M933.8 462.6 L941.3 459.4 M943.6 464.9 L950.4 455.5 L938.9 453.9 L942.0 456.6 L947.1 456.9 L943.8 460.7 Z" fill="none" stroke="#F4F4F4" stroke-width="1.2"/>
<path d="M239.3 826 L224.3 807.7" stroke="#2020C0" stroke-width="1.2"/><circle cx="224.5" cy="807.8" r="1.6" fill="#2020C0"/>
<path d="M239.3 826 L245.7 811.3" stroke="#30C040" stroke-width="1.2"/>
<path d="M239.3 826 L259.3 818" stroke="#D02020" stroke-width="1.2"/><circle cx="259" cy="818" r="1.6" fill="#D02020"/>
<text x="218.5" y="802" font-family="Liberation Sans" font-size="10" fill="#fff">z</text>
<text x="246" y="809" font-family="Liberation Sans" font-size="10" fill="#fff">y</text>
<text x="264.5" y="816" font-family="Liberation Sans" font-size="10" fill="#fff">x</text>
</g></svg>
</body></html>
